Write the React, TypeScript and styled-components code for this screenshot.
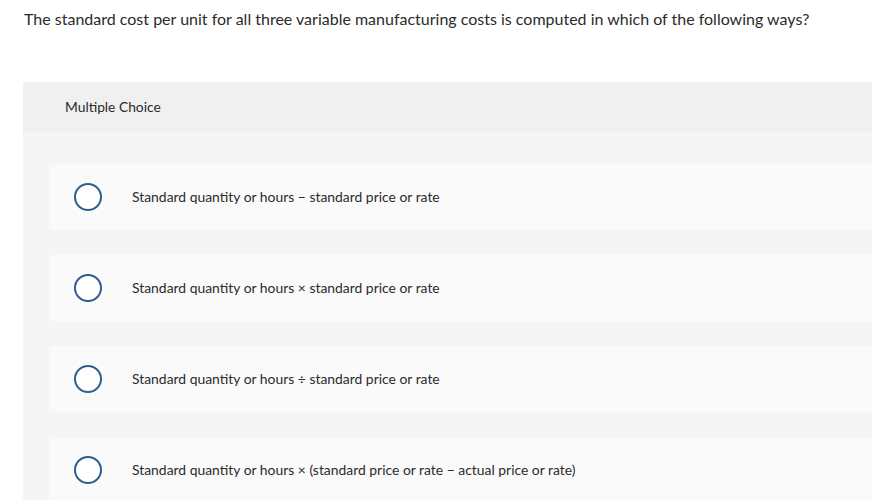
import styled, { createGlobalStyle } from "styled-components";

const GlobalStyle = createGlobalStyle`
  body {
    margin: 0;
    background: #fff;
    font-family: Lato, "Open Sans", Arial, sans-serif;
    color: #2b2b2b;
  }
`;

const Page = styled.div`
  width: 872px;
  height: 500px;
  overflow: hidden;
`;

const Question = styled.p`
  margin: 0;
  padding: 9px 24px 0 24px;
  font-size: 16px;
  line-height: 20px;
  height: 82px;
  box-sizing: border-box;
`;

const Panel = styled.section`
  margin-left: 23px;
  background: #f5f5f5;
`;

const PanelHeader = styled.div`
  height: 50px;
  display: flex;
  align-items: center;
  padding: 0 0 1px 42px;
  box-sizing: border-box;
  background: #f0f0f0;
  font-size: 13.8px;
`;

const OptionList = styled.div`
  display: flex;
  flex-direction: column;
  gap: 25px;
  padding: 32px 0 0 26px;
`;

const OptionCard = styled.label`
  height: 66px;
  display: flex;
  align-items: center;
  gap: 30px;
  padding-left: 25px;
  background: #fafafa;
  border-radius: 3px 0 0 3px;
  font-size: 13.9px;
`;

const OptionText = styled.span`
  padding-bottom: 2px;
`;

const Radio = styled.span`
  width: 24px;
  height: 24px;
  flex: none;
  border: 2px solid #2e5f8f;
  border-radius: 50%;
  background: #fff;
`;

const options = [
  "Standard quantity or hours \u2212 standard price or rate",
  "Standard quantity or hours \u00d7 standard price or rate",
  "Standard quantity or hours \u00f7 standard price or rate",
  "Standard quantity or hours \u00d7 (standard price or rate \u2212 actual price or rate)",
];

export default function App() {
  return (
    <Page>
      <GlobalStyle />
      <Question>
        The standard cost per unit for all three variable manufacturing costs is computed in which of the following ways?
      </Question>
      <Panel>
        <PanelHeader>Multiple Choice</PanelHeader>
        <OptionList>
          {options.map((text) => (
            <OptionCard key={text}>
              <Radio />
              <OptionText>{text}</OptionText>
            </OptionCard>
          ))}
        </OptionList>
      </Panel>
    </Page>
  );
}
